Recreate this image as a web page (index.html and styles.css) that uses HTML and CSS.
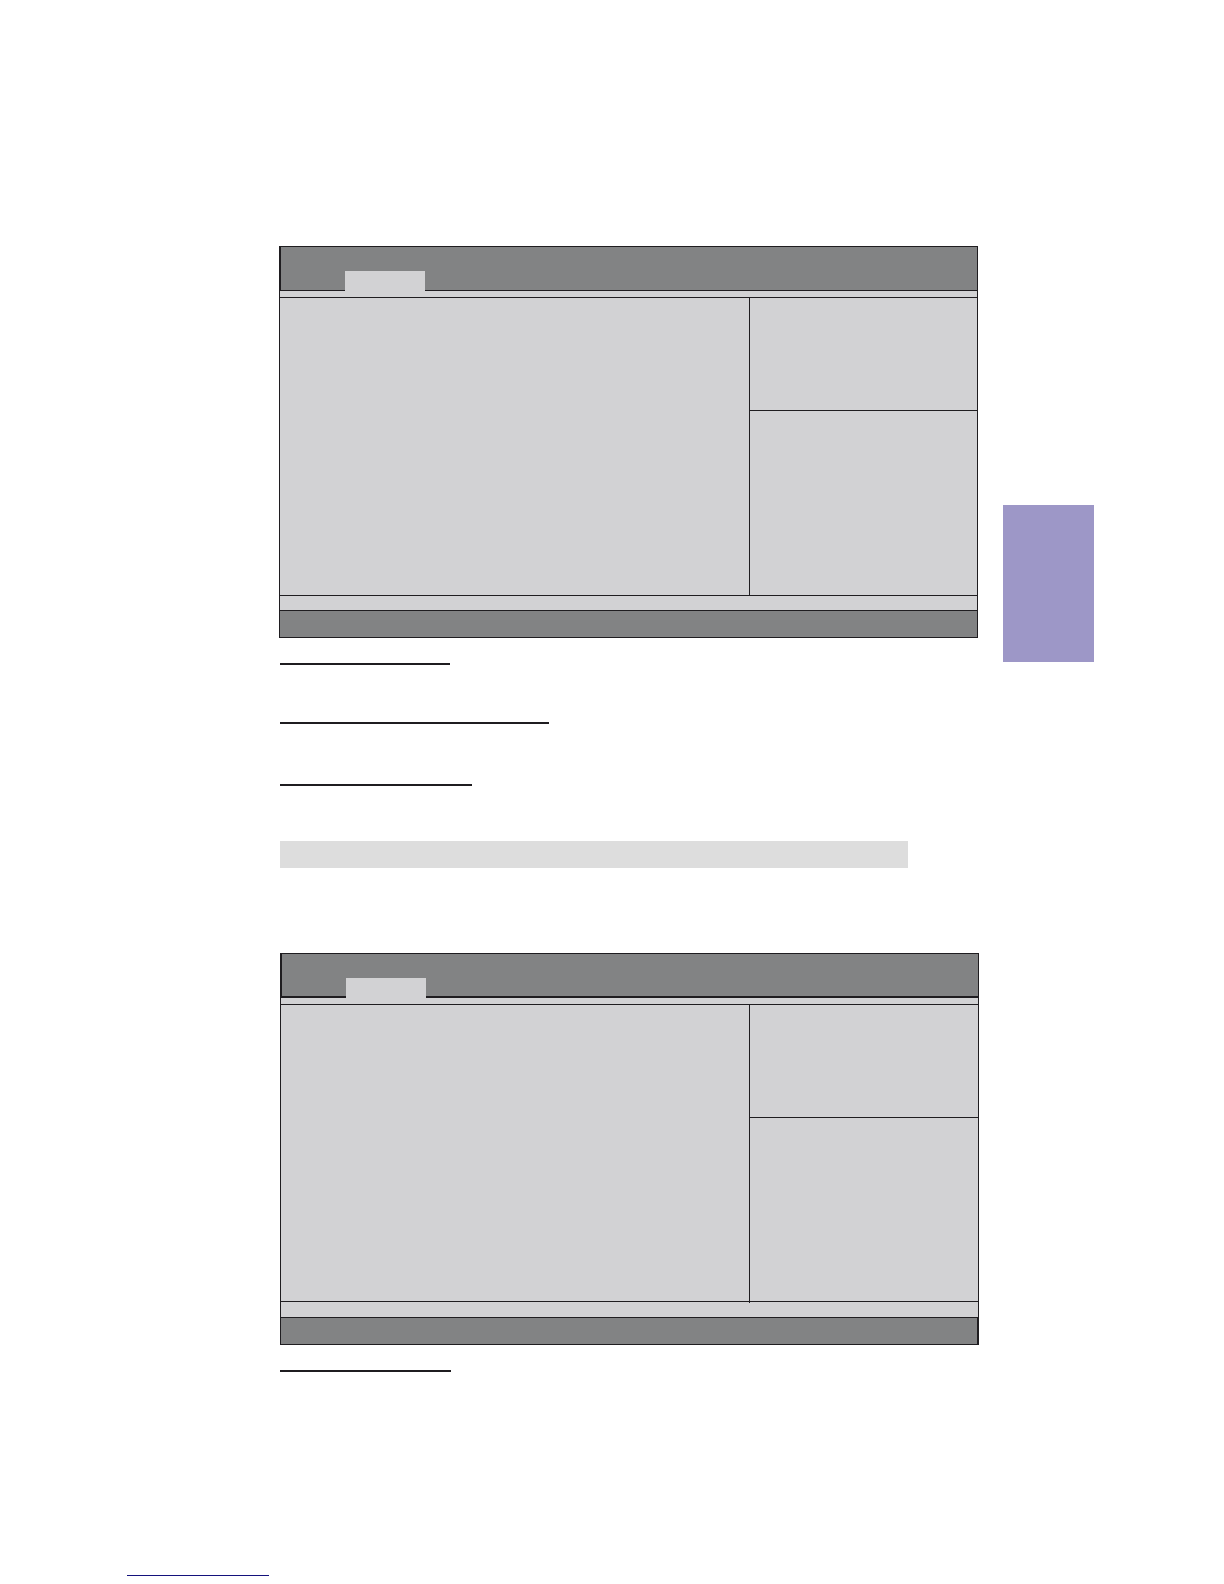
FILE: index.html
```html
<!DOCTYPE html>
<html lang="en">
<head>
<meta charset="utf-8">
<title>Setup screens</title>
<link rel="stylesheet" href="styles.css">
</head>
<body>
<div class="page">
  <main class="content">
    <section class="screen">
      <header class="screen-header"><div class="screen-tab"></div></header>
      <div class="screen-body">
        <div class="screen-main"></div>
        <div class="screen-side"><div class="screen-help"></div></div>
      </div>
      <div class="screen-status"></div>
      <footer class="screen-footer"></footer>
    </section>
    <hr class="rule rule-first">
    <hr class="rule rule-second">
    <hr class="rule rule-third">
    <div class="band"></div>
    <section class="screen screen-alt">
      <header class="screen-header"><div class="screen-tab"></div></header>
      <div class="screen-body">
        <div class="screen-main"></div>
        <div class="screen-side"><div class="screen-help"></div></div>
      </div>
      <div class="screen-status"></div>
      <footer class="screen-footer"></footer>
    </section>
    <hr class="rule rule-last">
  </main>
  <aside class="chapter-tab"></aside>
</div>
<hr class="link-rule">
</body>
</html>
```
FILE: styles.css
```css
* {
  box-sizing: border-box;
}

body {
  margin: 0;
  padding-bottom: 8px;
  background: #fff;
  font-family: "Liberation Sans", Arial, sans-serif;
}

.page {
  display: grid;
  grid-template-columns: minmax(0, 1fr) 91px;
  column-gap: 24px;
  align-items: start;
  padding: 246px 130px 0 279px;
}

.screen {
  margin-right: 1px;
  border: 1px solid #1f1d20;
  background: #d2d2d4;
}

.screen-header {
  display: flex;
  align-items: flex-end;
  height: 44px;
  padding-left: 64px;
  border-left: 1px solid #1f1d20;
  border-bottom: 1px solid #1f1d20;
  background: #828384;
}

.screen-tab {
  width: 80px;
  height: 20px;
  margin-bottom: -1px;
  background: #d2d2d4;
}

.screen-body {
  display: grid;
  grid-template-columns: minmax(0, 1fr) 228px;
  height: 299px;
  margin-top: 6px;
  border-top: 1px solid #1f1d20;
  border-bottom: 1px solid #1f1d20;
}

.screen-side {
  border-left: 1px solid #1f1d20;
}

.screen-help {
  height: 113px;
  border-bottom: 1px solid #1f1d20;
}

.screen-status {
  height: 14px;
}

.screen-footer {
  height: 27px;
  border-top: 1px solid #1f1d20;
  background: #828384;
}

.screen-alt {
  margin: 85px 0 0 1px;
}

.screen-alt .screen-header {
  border-bottom-width: 2px;
}

.screen-alt .screen-tab {
  margin-bottom: -2px;
}

.screen-alt .screen-body {
  grid-template-columns: minmax(0, 1fr) 229px;
  height: 298px;
}

.screen-alt .screen-side {
  margin-bottom: -2px;
}

.screen-alt .screen-status {
  height: 15px;
}

.screen-alt .screen-footer {
  border-right: 1px solid #1f1d20;
}

.rule {
  height: 2px;
  margin: 0 0 0 1px;
  border: 0;
  background: #1f1d20;
}

.rule-first {
  width: 170px;
  margin-top: 25px;
}

.rule-second {
  width: 269px;
  margin-top: 57px;
}

.rule-third {
  width: 192px;
  margin-top: 60px;
}

.rule-last {
  width: 171px;
  margin-top: 25px;
}

.band {
  height: 27px;
  margin: 55px 71px 0 1px;
  background: #dddddd;
}

.chapter-tab {
  height: 157px;
  margin-top: 259px;
  background: #9d97c7;
}

.link-rule {
  width: 142px;
  height: 1px;
  margin: 203px 0 0 127px;
  border: 0;
  background: #14127c;
}
```
